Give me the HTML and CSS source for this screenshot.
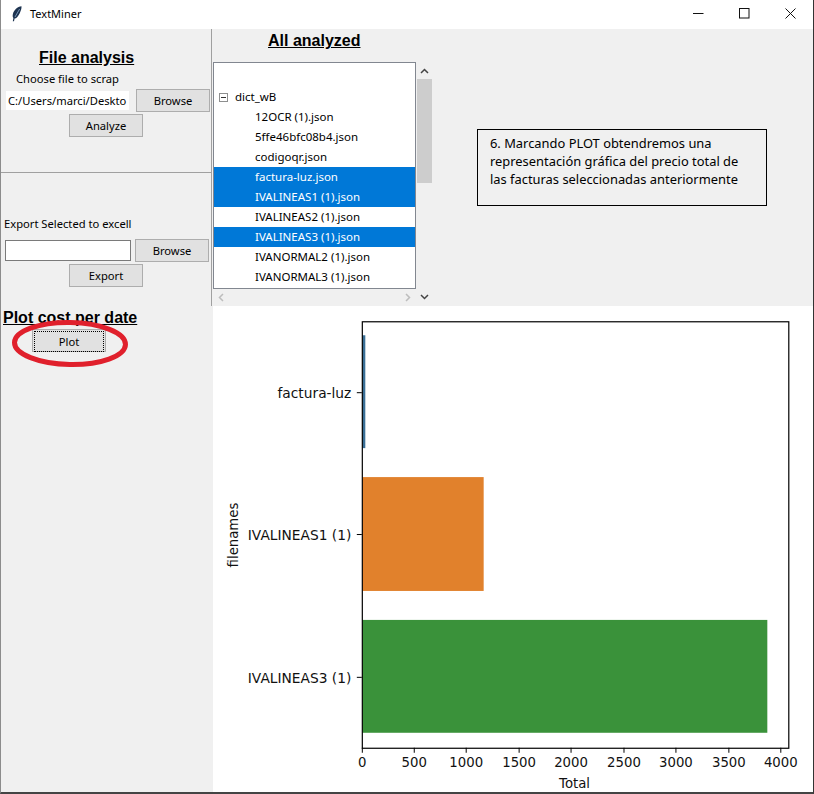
FILE: index.html
```html
<!DOCTYPE html>
<html lang="en">

<head>
  <meta charset="UTF-8">
  <title>TextMiner</title>
  <link rel="stylesheet" href="styles.css">
</head>

<body>
  <div class="window">
    <header class="titlebar">
      <svg class="app-icon" width="12" height="16" viewBox="0 0 12 16">
        <path d="M10.5 0.3 C6.5 0.8 2.8 4 1.9 8 C1.5 10 1.7 11 2.4 12 L1.8 15.3 L3 15.3 L3.6 12.6 C5.4 12.6 7.4 10 8.6 7.5 C9.8 5 10.7 2.5 10.5 0.3 Z" fill="#1d3350"/>
        <path d="M8.6 3 L4 11" stroke="#8fb0d0" stroke-width="0.8" fill="none"/>
      </svg>
      <span class="app-name">TextMiner</span>
      <div class="window-controls">
        <svg width="11" height="11" viewBox="0 0 11 11"><path d="M0 5.5 H10.5" stroke="#111" fill="none"/></svg>
        <svg width="11" height="11" viewBox="0 0 11 11"><rect x="0.5" y="0.5" width="9.5" height="9.5" stroke="#111" fill="none"/></svg>
        <svg width="11" height="11" viewBox="0 0 11 11"><path d="M0.5 0.5 L10.5 10.5 M10.5 0.5 L0.5 10.5" stroke="#111" fill="none"/></svg>
      </div>
    </header>

    <div class="top-row">
      <aside class="side-top">
        <section class="file-section">
          <h2 class="section-title file-title">File analysis</h2>
          <p class="field-label choose-label">Choose file to scrap</p>
          <div class="field-row file-row">
            <div class="entry entry-plain">C:/Users/marci/Deskto</div>
            <button class="tk-button" type="button">Browse</button>
          </div>
          <button class="tk-button action-button" type="button">Analyze</button>
        </section>

        <section class="export-section">
          <p class="field-label export-label">Export Selected to excell</p>
          <div class="field-row export-row">
            <div class="entry entry-boxed"></div>
            <button class="tk-button" type="button">Browse</button>
          </div>
          <button class="tk-button action-button" type="button">Export</button>
        </section>
      </aside>

      <main class="analyzed">
        <div class="tree-column">
          <h2 class="section-title analyzed-title">All analyzed</h2>
          <div class="tree-grid">
            <ul class="tree">
              <li class="tree-row"></li>
              <li class="tree-row tree-parent">
                <svg class="collapse-box" width="9" height="9" viewBox="0 0 9 9">
                  <rect x="0.5" y="0.5" width="8" height="8" fill="#fff" stroke="#8e8f8f"/>
                  <path d="M2 4.5 H7" stroke="#333"/>
                </svg>
                dict_wB
              </li>
              <li class="tree-row">12OCR (1).json</li>
              <li class="tree-row">5ffe46bfc08b4.json</li>
              <li class="tree-row">codigoqr.json</li>
              <li class="tree-row selected">factura-luz.json</li>
              <li class="tree-row selected">IVALINEAS1 (1).json</li>
              <li class="tree-row">IVALINEAS2 (1).json</li>
              <li class="tree-row selected">IVALINEAS3 (1).json</li>
              <li class="tree-row">IVANORMAL2 (1).json</li>
              <li class="tree-row">IVANORMAL3 (1).json</li>
            </ul>
            <div class="vbar">
              <svg class="vbar-arrow" width="9" height="6" viewBox="0 0 9 6"><path d="M1 5 L4.5 1.5 L8 5" stroke="#444" stroke-width="1.5" fill="none"/></svg>
              <div class="vbar-thumb"></div>
              <svg class="vbar-arrow vbar-down" width="9" height="6" viewBox="0 0 9 6"><path d="M1 1 L4.5 4.5 L8 1" stroke="#444" stroke-width="1.5" fill="none"/></svg>
            </div>
            <div class="hbar">
              <svg width="6" height="9" viewBox="0 0 6 9"><path d="M5 1 L1.5 4.5 L5 8" stroke="#bdbdbd" stroke-width="1.5" fill="none"/></svg>
              <svg width="6" height="9" viewBox="0 0 6 9"><path d="M1 1 L4.5 4.5 L1 8" stroke="#bdbdbd" stroke-width="1.5" fill="none"/></svg>
            </div>
          </div>
        </div>
        <p class="note">6. Marcando PLOT obtendremos una representación gráfica del precio total de las facturas seleccionadas anteriormente</p>
      </main>
    </div>

    <div class="bottom-row">
      <aside class="plot-section">
        <h2 class="section-title plot-title">Plot cost per date</h2>
        <button class="tk-button plot-button" type="button"><span class="focus-ring">Plot</span></button>
        <svg class="red-circle" width="124" height="56" viewBox="0 0 124 56">
          <ellipse cx="62" cy="28.500" rx="55.500" ry="21" fill="none" stroke="#e0202c" stroke-width="5" transform="rotate(1 62 28.500)"/>
        </svg>
      </aside>

      <svg class="chart" width="601" height="486" viewBox="213 306 601 486">
        <rect x="362.500" y="335" width="3" height="113" fill="#3a6f96"/>
        <rect x="362.500" y="477" width="121.500" height="114" fill="#e1812c"/>
        <rect x="362.500" y="620" width="405.500" height="113" fill="#3a923a"/>
        <rect x="362.500" y="321.500" width="427" height="427" fill="none" stroke="#000" stroke-width="1.200"/>

        <g stroke="#000" stroke-width="1">
          <path d="M362.500 748 V753 M414.500 748 V753 M466.500 748 V753 M519.500 748 V753 M571.500 748 V753 M624.500 748 V753 M676.500 748 V753 M729.500 748 V753 M781.500 748 V753"/>
          <path d="M357 392.500 H362 M357 534.500 H362 M357 677.500 H362"/>
        </g>

        <g class="tick-label" text-anchor="middle">
          <text x="362.500" y="767">0</text>
          <text x="414.500" y="767">500</text>
          <text x="466.500" y="767">1000</text>
          <text x="519.500" y="767">1500</text>
          <text x="571.500" y="767">2000</text>
          <text x="624.500" y="767">2500</text>
          <text x="676.500" y="767">3000</text>
          <text x="729.500" y="767">3500</text>
          <text x="781.500" y="767">4000</text>
          <text x="575" y="788">Total</text>
        </g>
        <g class="tick-label y-label" text-anchor="end">
          <text x="351.500" y="398">factura-luz</text>
          <text x="351.500" y="540">IVALINEAS1 (1)</text>
          <text x="351.500" y="683">IVALINEAS3 (1)</text>
        </g>
        <text class="tick-label" text-anchor="middle" transform="translate(238 535) rotate(-90)">filenames</text>
      </svg>
    </div>
  </div>
</body>

</html>
```

FILE: styles.css
```css
body {
  margin: 0;
  font-family: "Noto Sans", "Open Sans", sans-serif;
  color: #000;
}

.window {
  width: 814px;
  height: 794px;
  box-sizing: border-box;
  background-color: #f0f0f0;
  border-left: 1px solid #8c8c8c;
  border-right: 1px solid #333;
  border-bottom: 2px solid #444;
  overflow: hidden;
}

/* title bar */
.titlebar {
  display: flex;
  align-items: center;
  height: 29px;
  background-color: #fff;
}

.app-icon {
  margin-left: 10px;
  margin-top: -2px;
}

.app-name {
  margin-left: 7px;
  margin-top: -3px;
  font-size: 11px;
}

.window-controls {
  display: flex;
  gap: 35px;
  margin-left: auto;
  margin-right: 17px;
  margin-top: -3px;
}

/* top part */
.top-row {
  display: flex;
  height: 277px;
}

.side-top {
  width: 210px;
  border-right: 1px solid #a0a0a0;
}

.file-section {
  height: 143px;
  border-bottom: 1px solid #a0a0a0;
}

.section-title {
  margin: 0;
  font-family: "Liberation Sans", Arial, sans-serif;
  font-size: 16px;
  line-height: 18px;
  font-weight: bold;
  text-decoration: underline;
}

.file-title {
  margin-left: 38px;
  padding-top: 20px;
}

.field-label {
  margin: 0;
  font-size: 11.2px;
  line-height: 14px;
}

.choose-label {
  margin-left: 15px;
  margin-top: 5px;
}

.field-row {
  display: flex;
  align-items: center;
}

.file-row {
  margin-top: 3px;
  margin-left: 5px;
  gap: 7px;
}

.entry {
  box-sizing: border-box;
  background-color: #fff;
  font-size: 11.2px;
  white-space: nowrap;
  overflow: hidden;
}

.entry-plain {
  width: 123px;
  height: 19px;
  line-height: 19px;
  padding-left: 2px;
}

.tk-button {
  display: block;
  width: 74px;
  height: 23px;
  padding: 0;
  box-sizing: border-box;
  background-color: #e1e1e1;
  border: 1px solid #adadad;
  font-family: inherit;
  font-size: 11.2px;
  color: #000;
}

.action-button {
  margin-left: 68px;
  margin-top: 2px;
}

.export-section {
  padding-top: 44px;
}

.export-label {
  margin-left: 3px;
}

.export-row {
  margin-top: 8px;
  margin-left: 4px;
  gap: 4px;
}

.entry-boxed {
  width: 126px;
  height: 21px;
  border: 1px solid #7a7a7a;
}

/* all analyzed */
.analyzed {
  display: flex;
  flex: 1;
}

.tree-column {
  width: 222px;
}

.analyzed-title {
  margin-left: 56px;
  padding-top: 3px;
}

.tree-grid {
  display: grid;
  grid-template-columns: 203px 17px;
  grid-template-rows: 227px 16px;
  margin-top: 12px;
  margin-left: 1px;
}

.tree {
  margin: 0;
  padding: 4px 0 0;
  list-style: none;
  background-color: #fff;
  border: 1px solid #828790;
  box-sizing: border-box;
  overflow: hidden;
}

.tree-row {
  height: 20px;
  line-height: 20px;
  padding-left: 41px;
  font-size: 11.5px;
  color: #000;
  white-space: nowrap;
}

.tree-parent {
  display: flex;
  align-items: center;
  padding-left: 5px;
}

.collapse-box {
  margin-right: 7px;
}

.selected {
  background-color: #0078d7;
  color: #fff;
}

.vbar {
  display: flex;
  flex-direction: column;
  align-items: center;
  grid-row: 1 / 3;
  grid-column: 2;
}

.vbar-arrow {
  margin-top: 6px;
}

.vbar-thumb {
  width: 15px;
  height: 104px;
  margin-top: 5px;
  background-color: #cdcdcd;
}

.vbar-down {
  margin-top: auto;
  margin-bottom: 5px;
}

.hbar {
  display: flex;
  align-items: center;
  justify-content: space-between;
  padding: 0 5px;
}

.note {
  width: 264px;
  height: 59px;
  margin: 100px 0 0 43px;
  padding: 4px 12px 12px;
  border: 1px solid #000;
  font-size: 12.9px;
  line-height: 18px;
}

/* bottom part */
.bottom-row {
  display: flex;
}

.plot-section {
  position: relative;
  width: 212px;
}

.plot-title {
  margin-left: 2px;
  padding-top: 3px;
}

.plot-button {
  margin-left: 31px;
  margin-top: 2px;
  padding: 1px;
}

.focus-ring {
  display: block;
  height: 19px;
  line-height: 19px;
  border: 1px dotted #000;
}

.red-circle {
  position: absolute;
  left: 7px;
  top: 9px;
}

.chart {
  display: block;
  background-color: #fff;
}

.tick-label {
  font-family: "DejaVu Sans", sans-serif;
  font-size: 13.3px;
  fill: #111;
}

.y-label {
  font-size: 13.8px;
}
```
